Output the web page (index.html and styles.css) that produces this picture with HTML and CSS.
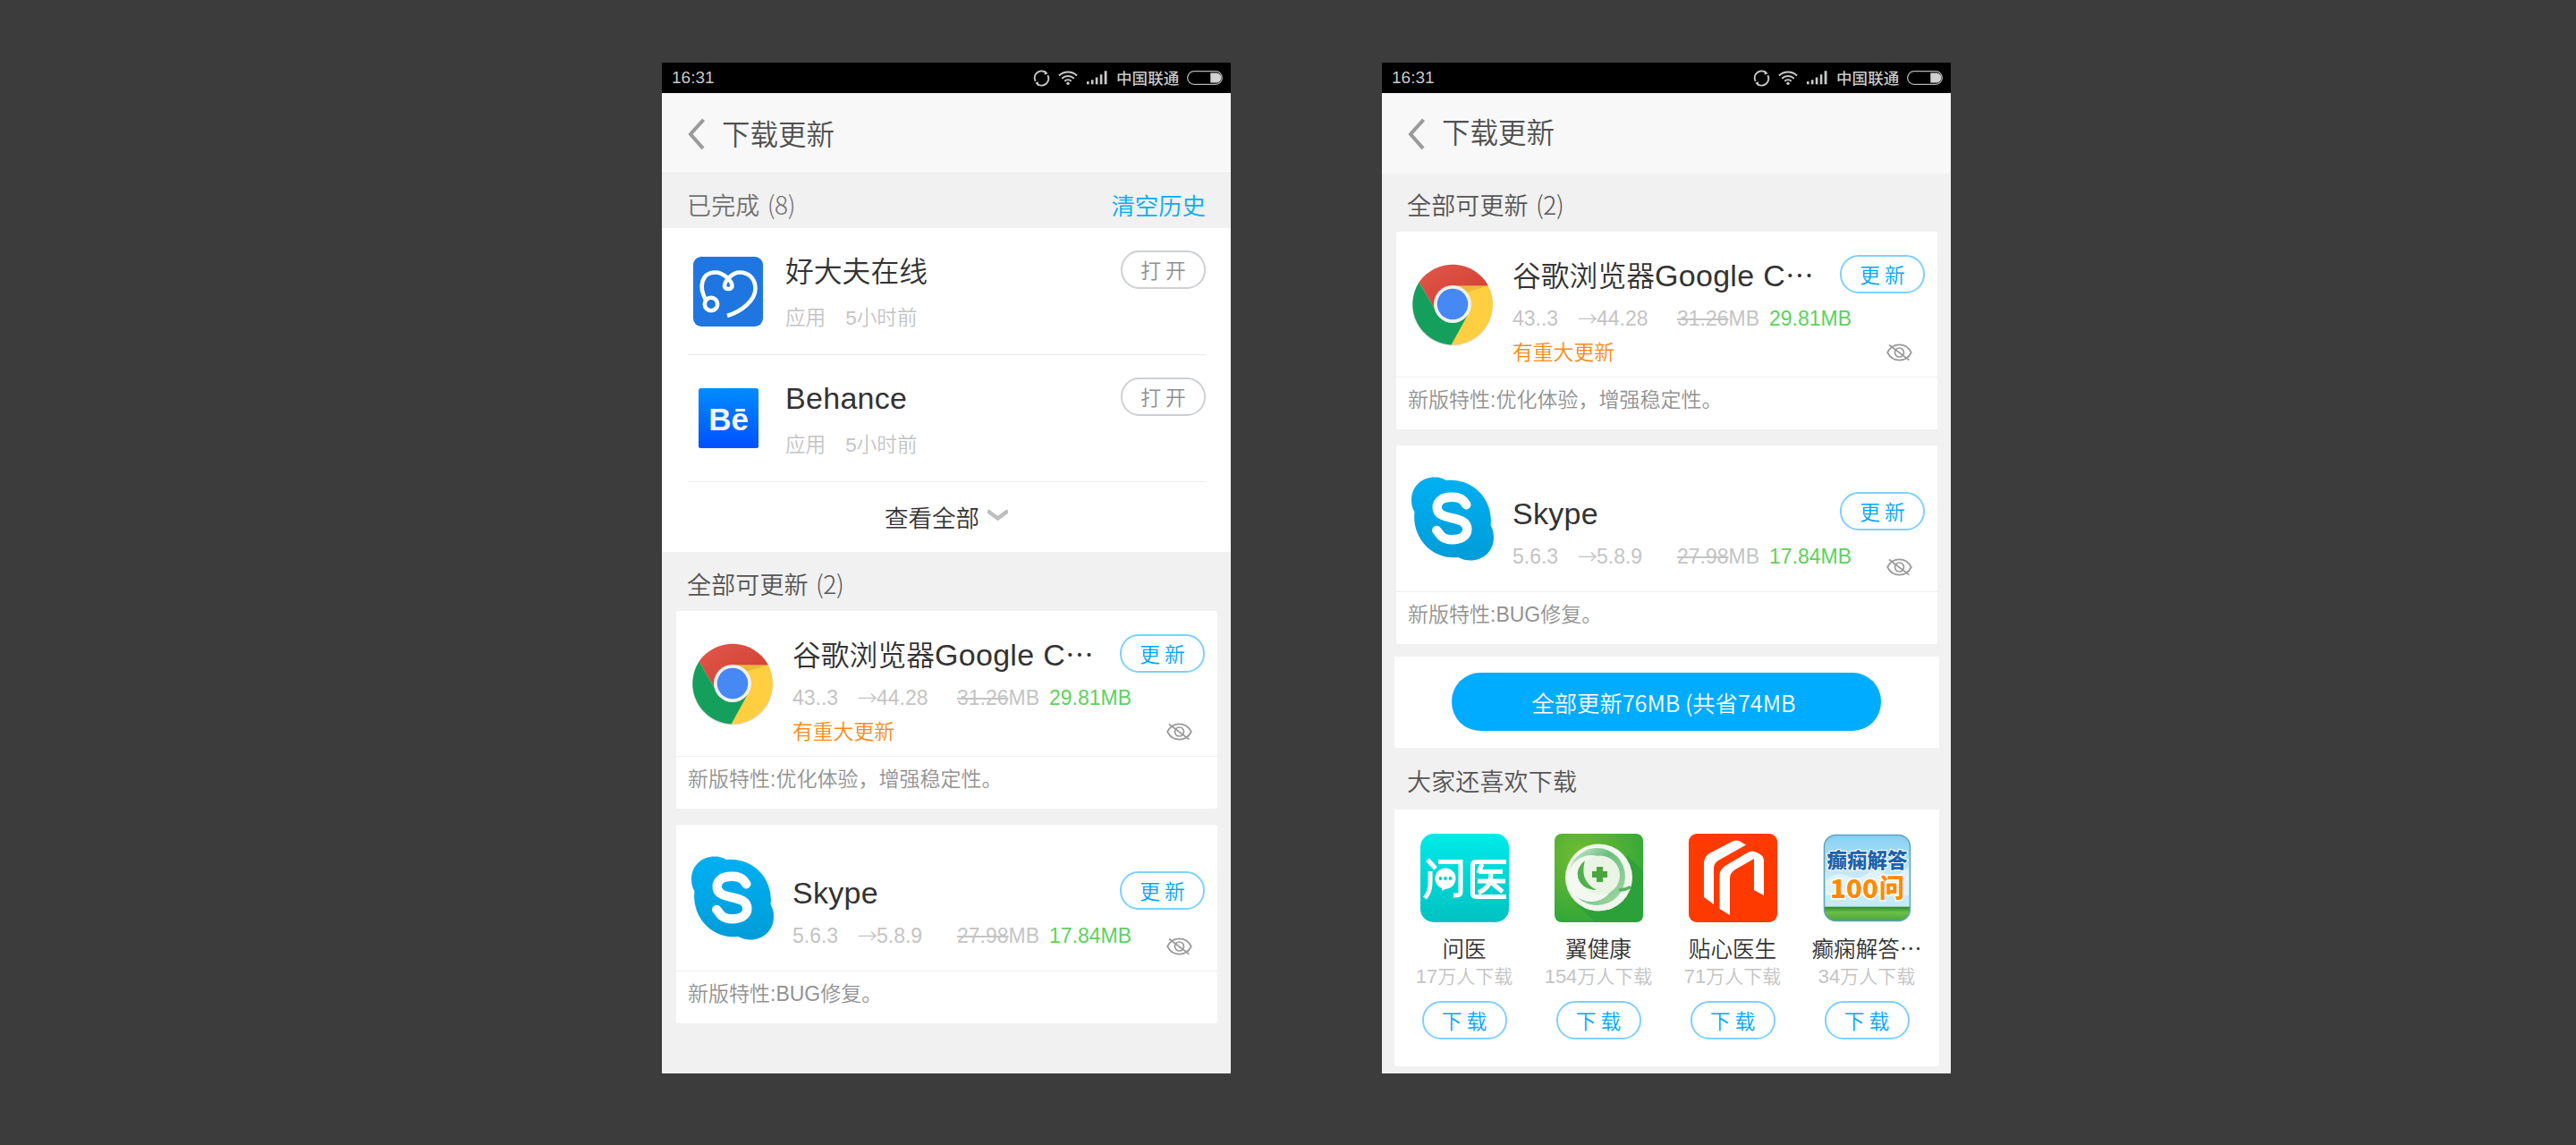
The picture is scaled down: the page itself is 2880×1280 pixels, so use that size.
FILE: index.html
```html
<!DOCTYPE html>
<html lang="zh-CN">
<head>
<meta charset="utf-8">
<title>下载更新</title>
<link rel="stylesheet" href="styles.css">
</head>
<body>
<svg class="defs" width="0" height="0" aria-hidden="true">
  <defs>
    <linearGradient id="be" x1="0" y1="0" x2="0" y2="1"><stop offset="0" stop-color="#008cff"/><stop offset="1" stop-color="#0050ff"/></linearGradient>
    <linearGradient id="sky" x1="0" y1="0" x2="0" y2="1"><stop offset="0" stop-color="#00b0f2"/><stop offset="1" stop-color="#009cd8"/></linearGradient>
    <linearGradient id="teal" x1="0" y1="0" x2="0" y2="1"><stop offset="0" stop-color="#00eae8"/><stop offset="1" stop-color="#00c2c2"/></linearGradient>
    <radialGradient id="green" cx=".3" cy=".25" r=".75"><stop offset="0" stop-color="#73bc30"/><stop offset="1" stop-color="#34a838"/></radialGradient>
    <linearGradient id="disc" x1="0" y1="0" x2="1" y2="1"><stop offset="0" stop-color="#d2efd4"/><stop offset=".4" stop-color="#6cbf80"/><stop offset="1" stop-color="#a5d9a4"/></linearGradient>
    <linearGradient id="day" x1="0" y1="0" x2="0" y2="1"><stop offset="0" stop-color="#86d0f2"/><stop offset=".5" stop-color="#cbeafa"/><stop offset=".83" stop-color="#c2ebf7"/><stop offset=".84" stop-color="#2f8a2c"/><stop offset=".9" stop-color="#6cc047"/><stop offset="1" stop-color="#4ba33b"/></linearGradient>
    <linearGradient id="red" x1="0" y1="0" x2="1" y2="1"><stop offset="0" stop-color="#e0584b"/><stop offset="1" stop-color="#cf3c2e"/></linearGradient>

    <symbol id="i-sync" viewBox="0 0 19 19"><g fill="none" stroke="#c8c8c8" stroke-width="2"><path d="M2.600 12.800A7.800 7.800 0 0 1 14.200 3"/><path d="M16.400 6.200A7.800 7.800 0 0 1 4.800 16"/></g><path d="M13 .8 16.600 4.200l-4 1.600zM6 13.200 2.400 14.800l3.600 3.400z" fill="#c8c8c8"/></symbol>
    <symbol id="i-wifi" viewBox="0 0 22 16"><g fill="none" stroke="#c8c8c8" stroke-width="2.100"><path d="M1 5.600a14.300 14.300 0 0 1 20 0"/><path d="M4.200 8.800a9.800 9.800 0 0 1 13.600 0"/><path d="M7.300 11.700a5.400 5.400 0 0 1 7.400 0"/></g><circle cx="11" cy="14.200" r="1.700" fill="#c8c8c8"/></symbol>
    <symbol id="i-signal" viewBox="0 0 23 16"><path fill="#c8c8c8" d="M0 12h2.600v3.300H0zM4.900 10.300h2.600v5H4.900zM9.800 7.500h2.600v7.800H9.800zM14.800 4.300h2.600v11h-2.600zM19.700.3h2.800v15h-2.800z"/></symbol>
    <symbol id="i-batt" viewBox="0 0 40 16"><rect x=".7" y=".7" width="38.600" height="14.600" rx="7.300" fill="none" stroke="#b4b4b4" stroke-width="1.300"/><path fill="#d0d0d0" d="M26.300 2.500h6.500a5.500 5.500 0 0 1 0 11h-6.500z"/></symbol>
    <symbol id="i-back" viewBox="0 0 20 36"><path d="M17.500 1.800 3 18l14 15.800" fill="none" stroke="#9a9a9a" stroke-width="4"/></symbol>
    <symbol id="i-down" viewBox="0 0 23 14"><path d="M0 2l11.500 8.600L23 2" fill="none" stroke="#bebebe" stroke-width="4.400"/></symbol>
    <symbol id="i-eye" viewBox="0 0 29 20"><g fill="none" stroke="#999" stroke-width="1.700"><path d="M1.200 10C7-1.600 22-1.600 27.800 10 22 21.600 7 21.600 1.200 10z"/><circle cx="14.500" cy="10" r="5"/><path d="M3 1.500 25.500 18.600"/></g></symbol>

    <symbol id="a-doctor" viewBox="0 0 78 78"><rect width="78" height="78" rx="9" fill="#1f76e0"/><g fill="none" stroke="#fff" stroke-width="4.600"><circle cx="20" cy="53" r="7.200"/><path d="M14 48C6 34 9 17.500 25 17.500c8 0 18.500 9 18.500 15.500 0 4-8.500 4-8.500 0C35 26.500 44 17.500 52 17.500c11 0 17.500 8 17.500 18C69.500 49 54 61 38 66"/></g></symbol>
    <symbol id="a-be" viewBox="0 0 67 67"><rect width="67" height="67" rx="2.500" fill="url(#be)"/><text x="33.500" y="46.500" text-anchor="middle" class="be-text">Bē</text></symbol>
    <symbol id="a-chrome" viewBox="0 0 92 94">
      <circle cx="46" cy="47.500" r="45" fill="#999" opacity=".35"/>
      <path d="M86 25.500A45.500 45.500 0 0 1 44.500 91.500L46 46z" fill="#ffce41"/>
      <path d="M46 25.500h40L60 70 46 60z" fill="#ffce41"/>
      <path d="M8.500 21.500A45.500 45.500 0 0 1 86 25.500H46L26.500 52z" fill="url(#red)"/>
      <path d="M8.500 21.500A45.500 45.500 0 0 0 44.500 91.500L63 58 46 66 27 53z" fill="#14a05c"/>
      <path d="M50 25.500h36l-24 7z" fill="#dfa82c" opacity=".55"/>
      <circle cx="46" cy="46" r="21" fill="#f1f1f1"/><circle cx="46" cy="46" r="17.300" fill="#4688f4"/>
    </symbol>
    <symbol id="a-skype" viewBox="0 0 93 94"><g fill="url(#sky)"><path d="M26 0C33 0 37 2 39 3.500 69 0 93 25 89.500 54 91 57 93 61 93 68 93 90 70 100 53 90.500 25 94 0 70 3.500 39 1 35 0 31 0 26 0 10 12 0 26 0z"/></g><path d="M62 31C57 22 50 22.500 45 22.500 35 22.500 29 27 29 34 29 51 63 41 63 59 63 67 55 70.500 46 70.500 33 70.500 32 63 28.500 60" fill="none" stroke="#fff" stroke-width="10.500" stroke-linecap="round"/></symbol>
    <symbol id="a-wenyi" viewBox="0 0 99 99"><rect width="99" height="99" rx="15" fill="url(#teal)"/><g fill="none" stroke="#fff" stroke-width="5"><path d="M8 29l9 10M11 42v12c0 9-2 13-6 18M20 31.500h25V65c0 4-3 4-8 4M96 31.500H62q-3.500 0-3.500 4v31q0 4 3.500 4h34M69 34l-4 10M66 42.500h26M64 53h31M79 43c0 12-3 18-14 23M80 55l12 10"/></g><circle cx="28" cy="50" r="11.500" fill="#fff"/><path d="M24 58v6l9-5z" fill="#fff"/><g fill="#00cfd0"><circle cx="22.500" cy="50" r="1.900"/><circle cx="28" cy="50" r="1.900"/><circle cx="33.500" cy="50" r="1.900"/></g></symbol>
    <symbol id="a-yi" viewBox="0 0 99 99"><rect width="99" height="99" rx="8" fill="url(#green)"/><path d="M82 25 99 42v49q0 8-8 8H46L25 80z" fill="#259a3a" opacity=".55"/><circle cx="49.500" cy="49" r="37.500" fill="#f1f7ee"/><ellipse cx="47.500" cy="48" rx="31.500" ry="32" fill="url(#disc)"/><ellipse cx="41" cy="50" rx="26" ry="26" fill="#f3f9f0"/><circle cx="51" cy="46.500" r="22" fill="#e9f4e5"/><path d="M34 30C18 43 27 63 47 63 36 57 29 48 34 30z" fill="#4fb04c"/><path d="M72 62.500q6 1 13-3" stroke="#55b45f" stroke-width="3.500" fill="none"/><path d="M47 37h7v5h5v7h-5v5h-7v-5h-5v-7h5z" fill="#4aa53e"/></symbol>
    <symbol id="a-tie" viewBox="0 0 99 99"><rect width="99" height="99" rx="9" fill="#ff3a00"/><path fill="#fff" d="M17 71V33q0-7 6-11L49 8.500q5-2 9 .5l6 3.500L33 30q-5 3-5 9v40zM34.500 84V47q0-7 6-11L66 21q5-3 10 0 8 3 8 9v39L73 63V28L52 40q-6 4-6 10v41z"/></symbol>
    <symbol id="a-100" viewBox="0 0 99 99"><rect x="1.500" y="1.500" width="96" height="96" rx="13" fill="url(#day)" stroke="#5aa5bd" stroke-width="1.500"/><path d="M3 53q12-12 24-6t22-2 20 0 27-8v32H3z" fill="#fff" opacity=".45"/><text x="49.500" y="37.500" text-anchor="middle" class="dx-text">癫痫解答</text><text x="8" y="72" textLength="54" lengthAdjust="spacingAndGlyphs" class="num-text">100</text><text x="63" y="71" class="num-text">问</text></symbol>
  </defs>
</svg>

<main class="stage">
  <section class="phone">
    <div class="status">
      <span class="clock">16:31</span>
      <svg class="s-sync"><use href="#i-sync"/></svg><svg class="s-wifi"><use href="#i-wifi"/></svg><svg class="s-signal"><use href="#i-signal"/></svg>
      <span class="carrier">中国联通</span><svg class="s-batt"><use href="#i-batt"/></svg>
    </div>
    <header class="bar bar-line"><svg class="back"><use href="#i-back"/></svg><h1 class="low">下载更新</h1></header>

    <div class="section done"><h2>已完成 <span class="count">(8)</span></h2><a class="clear">清空历史</a></div>
    <div class="history">
      <article class="app">
        <svg class="app-icon"><use href="#a-doctor"/></svg>
        <div class="app-text"><h3>好大夫在线</h3><p><span class="kind">应用</span><span>5小时前</span></p></div>
        <button class="pill grey">打 开</button>
      </article>
      <article class="app">
        <svg class="app-icon be"><use href="#a-be"/></svg>
        <div class="app-text"><h3><span class="lat">Behance</span></h3><p><span class="kind">应用</span><span>5小时前</span></p></div>
        <button class="pill grey">打 开</button>
      </article>
      <div class="more"><span>查看全部</span><svg><use href="#i-down"/></svg></div>
    </div>

    <div class="section all"><h2>全部可更新 <span class="count">(2)</span></h2></div>
    <article class="card">
      <div class="card-main">
        <svg class="card-icon"><use href="#a-chrome"/></svg>
        <div class="card-text">
          <h3>谷歌浏览器<span class="lat">Google C</span>…</h3>
          <p class="ver"><span class="from">43..3</span><span class="to"><i>→</i>44.28</span><span class="old"><s>31.26</s>MB</span><span class="new">29.81MB</span></p>
          <p class="tag">有重大更新</p>
        </div>
        <div class="card-side"><button class="pill">更 新</button><svg class="eye"><use href="#i-eye"/></svg></div>
      </div>
      <p class="note">新版特性:优化体验，增强稳定性。</p>
    </article>
    <article class="card short">
      <div class="card-main">
        <svg class="card-icon"><use href="#a-skype"/></svg>
        <div class="card-text">
          <h3><span class="lat">Skype</span></h3>
          <p class="ver"><span class="from">5.6.3</span><span class="to"><i>→</i>5.8.9</span><span class="old"><s>27.98</s>MB</span><span class="new">17.84MB</span></p>
        </div>
        <div class="card-side"><button class="pill">更 新</button><svg class="eye"><use href="#i-eye"/></svg></div>
      </div>
      <p class="note">新版特性:BUG修复。</p>
    </article>
  </section>

  <section class="phone">
    <div class="status">
      <span class="clock">16:31</span>
      <svg class="s-sync"><use href="#i-sync"/></svg><svg class="s-wifi"><use href="#i-wifi"/></svg><svg class="s-signal"><use href="#i-signal"/></svg>
      <span class="carrier">中国联通</span><svg class="s-batt"><use href="#i-batt"/></svg>
    </div>
    <header class="bar"><svg class="back"><use href="#i-back"/></svg><h1>下载更新</h1></header>

    <div class="section top"><h2>全部可更新 <span class="count">(2)</span></h2></div>
    <article class="card">
      <div class="card-main">
        <svg class="card-icon"><use href="#a-chrome"/></svg>
        <div class="card-text">
          <h3>谷歌浏览器<span class="lat">Google C</span>…</h3>
          <p class="ver"><span class="from">43..3</span><span class="to"><i>→</i>44.28</span><span class="old"><s>31.26</s>MB</span><span class="new">29.81MB</span></p>
          <p class="tag">有重大更新</p>
        </div>
        <div class="card-side"><button class="pill">更 新</button><svg class="eye"><use href="#i-eye"/></svg></div>
      </div>
      <p class="note">新版特性:优化体验，增强稳定性。</p>
    </article>
    <article class="card short">
      <div class="card-main">
        <svg class="card-icon"><use href="#a-skype"/></svg>
        <div class="card-text">
          <h3><span class="lat">Skype</span></h3>
          <p class="ver"><span class="from">5.6.3</span><span class="to"><i>→</i>5.8.9</span><span class="old"><s>27.98</s>MB</span><span class="new">17.84MB</span></p>
        </div>
        <div class="card-side"><button class="pill">更 新</button><svg class="eye"><use href="#i-eye"/></svg></div>
      </div>
      <p class="note">新版特性:BUG修复。</p>
    </article>

    <div class="panel update-all"><button>全部更新76MB (共省74MB</button></div>

    <div class="section likes"><h2>大家还喜欢下载</h2></div>
    <div class="panel picks">
      <article class="pick"><svg><use href="#a-wenyi"/></svg><h4>问医</h4><p><b>17</b>万人下载</p><button class="pill">下 载</button></article>
      <article class="pick"><svg><use href="#a-yi"/></svg><h4>翼健康</h4><p><b>154</b>万人下载</p><button class="pill">下 载</button></article>
      <article class="pick"><svg><use href="#a-tie"/></svg><h4>贴心医生</h4><p><b>71</b>万人下载</p><button class="pill">下 载</button></article>
      <article class="pick"><svg><use href="#a-100"/></svg><h4>癫痫解答…</h4><p><b>34</b>万人下载</p><button class="pill">下 载</button></article>
    </div>
  </section>
</main>
</body>
</html>
```
FILE: styles.css
```css
* { box-sizing: border-box; }
body { margin: 0; background: #3c3c3c; font-family: "Noto Sans CJK SC", sans-serif; font-weight: 350; }
h1, h2, h3, h4, p { margin: 0; font-weight: inherit; white-space: nowrap; }
svg { display: block; flex: none; }
button { padding: 0; font: inherit; background: none; border: 0; white-space: nowrap; }
.defs { position: absolute; }

.stage { display: flex; gap: 169px; height: 1280px; padding: 70px 0 0 740px; }
.phone { flex: none; display: flex; flex-direction: column; width: 636px; height: 1130px; background: #f1f1f1; overflow: hidden; }
.phone > * { flex: none; }

/* status bar */
.status { display: flex; align-items: center; height: 34px; padding: 0 9px 0 11px; background: #000; color: #c8c8c8; }
.clock { flex: 1; font: 19px/34px "Liberation Sans", sans-serif; }
.s-sync { width: 19px; height: 19px; margin-right: 9px; }
.s-wifi { width: 22px; height: 16px; margin-right: 10px; }
.s-signal { width: 23px; height: 16px; margin-right: 10px; }
.carrier { font-size: 17.600px; font-weight: 500; line-height: 30px; width: 71px; margin: -1px 8px 0 0; }
.s-batt { width: 40px; height: 16px; }

/* title bar */
.bar { display: flex; align-items: flex-start; height: 89px; padding: 27px 0 0 29px; margin-top: 1px; background: #f8f8f8; }
.bar-line { border-bottom: 1px solid #ebebeb; }
.back { width: 20px; height: 36px; }
h1 { margin: -8px 0 0 18px; font-size: 31.500px; line-height: 44px; color: #505050; }
h1.low { margin-top: -6px; }

/* section labels */
.section { display: flex; justify-content: space-between; padding: 0 28px 0 28px; font-size: 27px; line-height: 40px; color: #555; }
h2 { font-size: 27px; letter-spacing: .15px; }
.count { margin-left: 2px; font-weight: 300; font-size: 28px; line-height: 1; letter-spacing: -.4px; }
.done { height: 61px; padding-top: 15px; color: #717171; }
.clear { font-size: 26.400px; color: #00aef4; }
.all { height: 66px; padding-top: 16px; }
.top { height: 65px; padding-top: 15px; }
.likes { height: 69px; padding-top: 17px; }

/* finished downloads */
.history { height: 362px; background: #fff; }
.app { display: flex; align-items: center; height: 142px; margin: 0 28px 0 29px; padding-left: 6px; border-bottom: 1px solid #ececec; }
.app-icon { width: 78px; height: 78px; }
.app-icon.be { width: 67px; height: 67px; margin: 0 5px 0 6px; }
.app-text { flex: 1; align-self: flex-start; padding: 26px 0 0 25px; }
h3 { height: 40px; font-size: 31.800px; line-height: 40px; color: #333; }
.lat { font-family: "Liberation Sans", sans-serif; font-size: 34px; line-height: 1; letter-spacing: .3px; }
.app-text p { margin-top: 20px; font: 350 22.600px/30px "Liberation Sans", "Noto Sans CJK SC", sans-serif; color: #c4c4c4; }
.kind { margin-right: 22px; }
.more { display: flex; justify-content: center; padding: 19px 0 0 0; font-size: 26.500px; line-height: 40px; color: #333; }
.more svg { width: 23px; height: 14px; margin: 11px 0 0 9px; }

.pill { flex: none; width: 95px; height: 43px; border: 2px solid #7fd0ff; border-radius: 21px; font-size: 22.800px; line-height: 36px; color: #00a6fb; }
.pill.grey { align-self: flex-start; margin-top: 25px; border-color: #cdd0d3; color: #8b8f92; }

/* update cards */
.card { width: 605px; height: 221px; margin: 0 0 18px 16px; background: #fff; border-radius: 2px; }
.card-main { display: flex; height: 163px; border-bottom: 1px solid #eee; }
.card.short { height: 222px; }
.short .card-main { height: 164px; }
.card-icon { width: 92px; height: 94px; margin: 35px 0 0 17px; }
.card-text { flex: 1; min-width: 0; padding: 27px 0 0 21px; }
.short .card-text { padding-top: 54px; }
.ver { display: grid; grid-template-columns: 73px 111px 103px auto; justify-content: start; margin-top: 14px; font: 23px/32px "Liberation Sans", sans-serif; color: #c4c4c4; }
.to { display: flex; }
.to i { width: 21px; font: 350 22px/28px "Noto Sans CJK SC", sans-serif; }
.new { color: #5dd25d; }
.tag { margin-top: 4px; font-size: 22.800px; line-height: 34px; color: #f98a16; }
.card-side { display: flex; flex-direction: column; align-items: center; justify-content: space-between; width: 109px; padding: 26px 14px 17px 0; }
.short .card-side { padding-top: 52px; }
.eye { width: 29px; height: 20px; margin-left: 37px; }
.note { padding: 8px 0 0 13px; font: 350 23px/34px "Liberation Sans", "Noto Sans CJK SC", sans-serif; color: #929292; }

/* update-all and recommendations */
.panel { width: 609px; margin-left: 14px; background: #fff; }
.update-all { height: 102px; margin-top: -4px; padding: 18px 0 0 64px; }
.update-all button { width: 480px; height: 65px; padding-right: 6px; border-radius: 32px; background: #00acff; color: #fff; font-size: 25.300px; line-height: 62px; }
.picks { display: grid; grid-template-columns: repeat(4, 150px); height: 287px; padding: 27px 0 0 3px; }
.pick { display: flex; flex-direction: column; align-items: center; }
.pick svg { width: 99px; height: 99px; }
h4 { margin-top: 10px; font-size: 24.600px; line-height: 36px; color: #333; }
.pick p { font: 350 21px/30px "Liberation Sans", "Noto Sans CJK SC", sans-serif; color: #c4c4c4; }
.pick b { font-weight: 400; font-size: 22px; line-height: 1; }
.pick .pill { margin-top: 12px; }

.be-text { font: bold 35px "Liberation Sans", sans-serif; fill: #f2f4f8; }
.dx-text { font: 900 22.500px "Noto Sans CJK SC", serif; fill: #1c62ad; stroke: #fff; stroke-width: 2px; paint-order: stroke; }
.num-text { font: 900 28px "Noto Sans CJK SC", sans-serif; fill: #ff8a00; stroke: #fff; stroke-width: 3px; paint-order: stroke; }
```
